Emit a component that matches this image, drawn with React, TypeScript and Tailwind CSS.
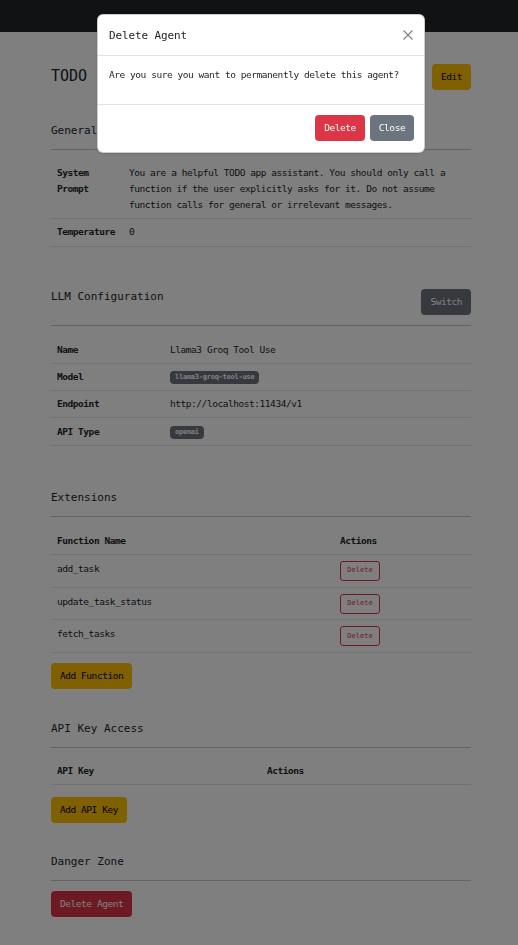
import React from 'react';

const mono = "font-['DejaVu_Sans_Mono','Liberation_Mono',monospace]";

interface SectionProps {
  title: string;
  action?: React.ReactNode;
  className?: string;
  children?: React.ReactNode;
}

const Section: React.FC<SectionProps> = ({ title, action, className, children }) => (
  <section className={className}>
    <div className="flex justify-between items-start">
      <h2 className="text-[11px] leading-[16px]">{title}</h2>
      {action}
    </div>
    <div className="mt-[10px] h-px bg-[#c8c9ca]" />
    {children}
  </section>
);

const Badge: React.FC<{ children: React.ReactNode }> = ({ children }) => (
  <span className="inline-flex items-center h-[13px] px-[5px] rounded-[4px] bg-[#6c757d] text-white text-[7px] font-bold tracking-[-0.25px] leading-none align-middle">
    {children}
  </span>
);

const btn = 'inline-flex items-center justify-center h-[26px] px-[9px] rounded-[4px] text-[9.5px] tracking-[-0.45px] leading-none';

const Row: React.FC<{ label: string; children: React.ReactNode }> = ({ label, children }) => (
  <tr className="border-b border-[#dee2e6]">
    <th className="text-left align-top font-bold px-[6px] py-[5.15px]">{label}</th>
    <td className="align-top px-[6px] py-[5.15px]">{children}</td>
  </tr>
);

const functions = ['add_task', 'update_task_status', 'fetch_tasks'];

export default function App() {
  return (
    <div className={`min-h-screen bg-white text-[#212529] ${mono}`}>
      <nav className="h-[32px] bg-[#212529]" />

      <main className="pl-[51px] w-[471px] pt-[32px] pb-[40px]">
        <div className="flex justify-between items-center h-[25px]">
          <h1 className="text-[15px] leading-[25px]">TODO</h1>
          <button className={`${btn} h-[25px] bg-[#ffc107] text-black`}>Edit</button>
        </div>

        <Section title="General" className="mt-[34px]">
          <table className="mt-[10px] w-full table-fixed border-collapse text-[9.5px] tracking-[-0.45px] leading-[16px]">
            <colgroup>
              <col className="w-[72px]" />
              <col />
            </colgroup>
            <tbody>
              <Row label="System Prompt">
                You are a helpful TODO app assistant. You should only call a function if the user explicitly asks for it. Do not assume function calls for general or irrelevant messages.
              </Row>
              <Row label="Temperature">0</Row>
            </tbody>
          </table>
        </Section>

        <Section
          title="LLM Configuration"
          className="mt-[42px]"
          action={<button className={`${btn} bg-[#6c757d] text-white`}>Switch</button>}
        >
          <table className="mt-[11px] w-full table-fixed border-collapse text-[9.5px] tracking-[-0.45px] leading-[16px]">
            <colgroup>
              <col className="w-[113px]" />
              <col />
            </colgroup>
            <tbody>
              <Row label="Name">Llama3 Groq Tool Use</Row>
              <Row label="Model">
                <Badge>llama3-groq-tool-use</Badge>
              </Row>
              <Row label="Endpoint">http://localhost:11434/v1</Row>
              <Row label="API Type">
                <Badge>openai</Badge>
              </Row>
            </tbody>
          </table>
        </Section>

        <Section title="Extensions" className="mt-[44px]">
          <table className="mt-[11px] w-full table-fixed border-collapse text-[9.5px] tracking-[-0.45px] leading-[16px]">
            <colgroup>
              <col className="w-[283px]" />
              <col />
            </colgroup>
            <thead>
              <tr className="border-b border-[#dee2e6]">
                <th className="text-left font-bold px-[6px] py-[5.15px]">Function Name</th>
                <th className="text-left font-bold px-[6px] py-[5.15px]">Actions</th>
              </tr>
            </thead>
            <tbody>
              {functions.map((name) => (
                <tr key={name} className="border-b border-[#dee2e6]">
                  <td className="align-top px-[6px] py-[5.85px]">{name}</td>
                  <td className="align-top px-[6px] py-[5.85px]">
                    <button className="flex items-center justify-center w-[40px] h-[20px] rounded-[3px] border border-[#dc3545] text-[#dc3545] text-[7px] tracking-normal leading-none">
                      Delete
                    </button>
                  </td>
                </tr>
              ))}
            </tbody>
          </table>
          <button className={`${btn} mt-[10px] bg-[#ffc107] text-black`}>Add Function</button>
        </Section>

        <Section title="API Key Access" className="mt-[32px]">
          <table className="mt-[10px] w-full table-fixed border-collapse text-[9.5px] tracking-[-0.45px] leading-[16px]">
            <thead>
              <tr className="border-b border-[#dee2e6]">
                <th className="text-left font-bold px-[6px] py-[5.15px]">API Key</th>
                <th className="text-left font-bold px-[6px] py-[5.15px]">Actions</th>
              </tr>
            </thead>
          </table>
          <button className={`${btn} mt-[11.5px] bg-[#ffc107] text-black`}>Add API Key</button>
        </Section>

        <Section title="Danger Zone" className="mt-[31px]">
          <button className={`${btn} mt-[10px] bg-[#dc3545] text-white`}>Delete Agent</button>
        </Section>
      </main>

      {/* modal backdrop */}
      <div className="fixed inset-0 bg-black/50" />

      <div className="fixed top-[14px] left-[97px] w-[328px] bg-white rounded-[6px] border border-black/20 shadow-sm">
        <div className="flex items-center justify-between h-[41px] pl-[11px] pr-[9px] border-b border-[#dee2e6]">
          <h5 className="text-[11px] font-medium tracking-[-0.12px] leading-none">Delete Agent</h5>
          <button className="w-[14px] h-[14px] flex items-center justify-center opacity-50">
            <svg width="10" height="10" viewBox="0 0 10 10" fill="none" stroke="#000" strokeWidth="1.1">
              <path d="M0.5 0.5L9.5 9.5M9.5 0.5L0.5 9.5" />
            </svg>
          </button>
        </div>
        <div className="px-[11px] pt-[11px] pb-[21px] text-[9.5px] tracking-[-0.45px] leading-[16px]">
          Are you sure you want to permanently delete this agent?
        </div>
        <div className="flex justify-end gap-[5px] pl-[11px] pr-[10px] pt-[10px] pb-[11px] border-t border-[#dee2e6]">
          <button className={`${btn} w-[50px] bg-[#dc3545] text-white`}>Delete</button>
          <button className={`${btn} w-[44px] bg-[#6c757d] text-white`}>Close</button>
        </div>
      </div>
    </div>
  );
}
